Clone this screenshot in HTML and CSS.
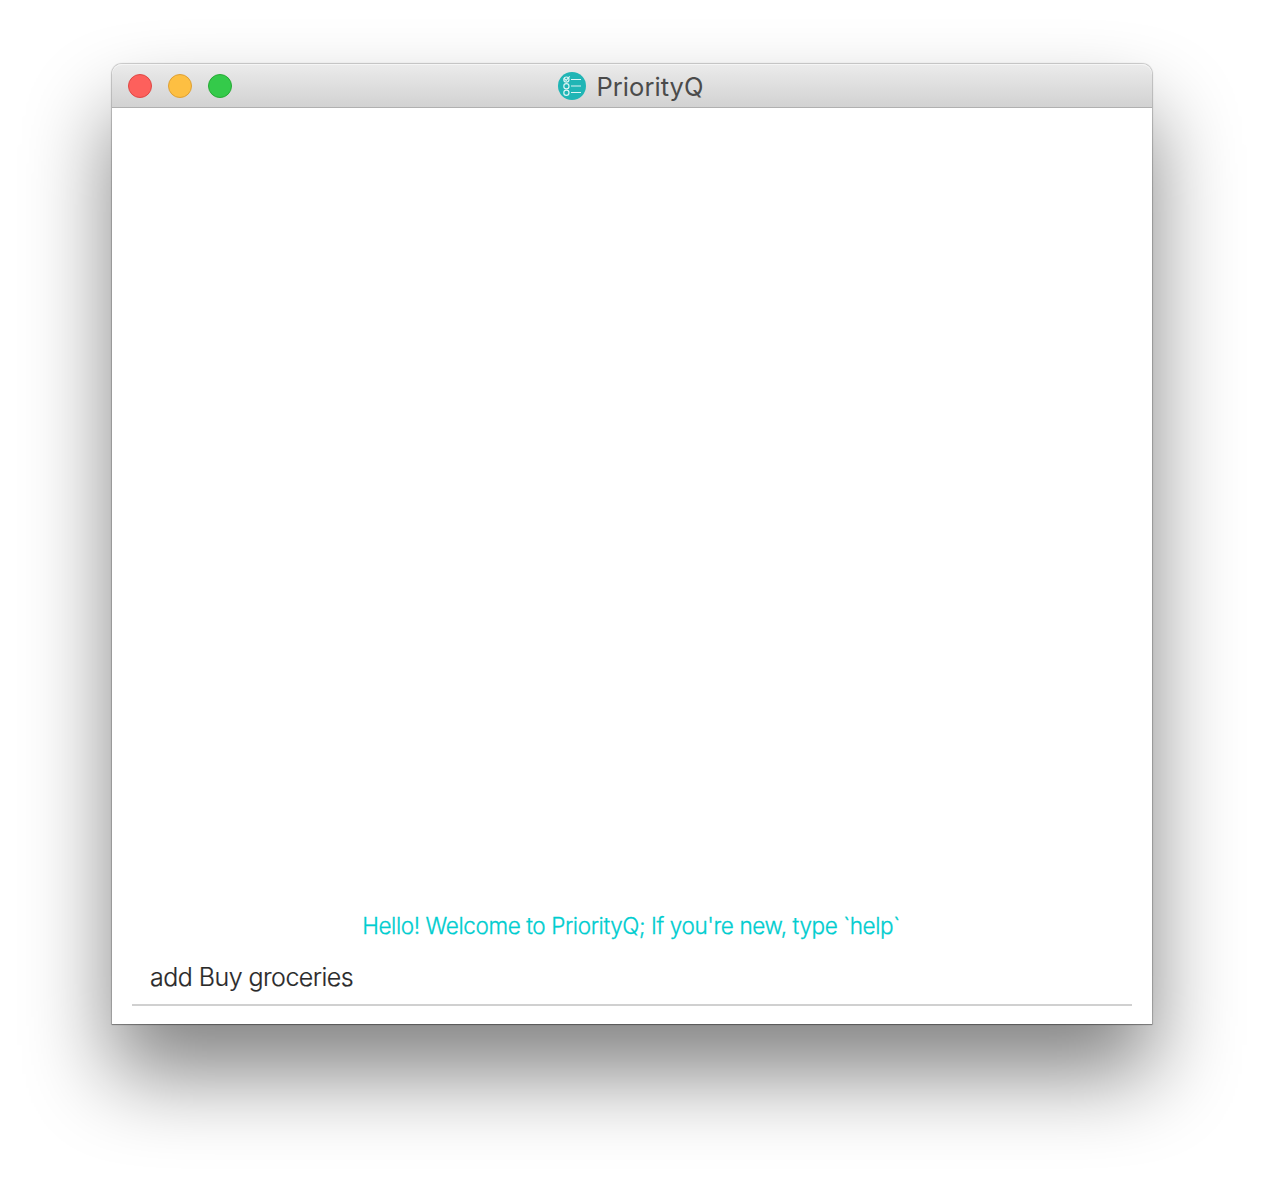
FILE: index.html
```html
<!DOCTYPE html>
<html lang="en">
<head>
<meta charset="utf-8">
<title>PriorityQ</title>
<link rel="stylesheet" href="styles.css">
</head>
<body>
<main class="window">
  <header class="titlebar">
    <div class="controls">
      <span class="control close"></span>
      <span class="control minimize"></span>
      <span class="control zoom"></span>
    </div>
    <div class="heading">
      <svg class="logo" viewBox="0 0 28 28" aria-hidden="true">
        <circle cx="14" cy="14" r="14" fill="#20b5b5"/>
        <g fill="none" stroke="#fff" stroke-width="1.2" opacity=".85">
          <circle cx="8.4" cy="7.6" r="2.6"/>
          <circle cx="8.4" cy="14.2" r="2.6"/>
          <circle cx="8.4" cy="20.7" r="2.6"/>
          <path d="M6 6.2l2.2 2.1 3.5-3.9"/>
          <path d="M13 7.5h10M13 14h10M13 20.5h10"/>
        </g>
      </svg>
      <span class="title">PriorityQ</span>
    </div>
  </header>
  <section class="content">
    <p class="message"><span class="message-text">Hello! Welcome to PriorityQ; If you're new, type `help`</span></p>
    <div class="command"><span class="command-text">add Buy groceries</span></div>
  </section>
</main>
</body>
</html>
```
FILE: styles.css
```css
* { box-sizing: border-box; }
body {
  margin: 0;
  height: 1184px;
  padding: 64px 112px 160px;
  overflow: hidden;
  background: #fff;
  font-family: Inter, "Liberation Sans", sans-serif;
}
.window {
  display: flex;
  flex-direction: column;
  height: 960px;
  border-radius: 10px 10px 0 0;
  background: #fff;
  box-shadow: 0 0 1px 1px rgba(0, 0, 0, .2), 0 1px 1px rgba(0, 0, 0, .25), 0 50px 86px rgba(0, 0, 0, .49);
}
.titlebar {
  display: grid;
  grid-template-columns: 1fr auto 1fr;
  align-items: center;
  height: 44px;
  padding: 0 16px;
  border-bottom: 1px solid #b0b0b0;
  border-radius: 10px 10px 0 0;
  background: linear-gradient(#ebebeb, #d2d2d2);
  box-shadow: inset 0 1px #f5f5f5;
}
.controls { display: flex; gap: 16px; }
.control { width: 24px; height: 24px; border: 1px solid; border-radius: 50%; }
.close { background: #fd605c; border-color: #df4845; }
.minimize { background: #fdbf42; border-color: #dea034; }
.zoom { background: #34ca4a; border-color: #27aa35; }
.heading { display: flex; align-items: center; gap: 10px; padding-right: 2px; color: #4b4b4b; }
.logo { width: 28px; height: 28px; }
.title { font-size: 25.5px; line-height: 32px; letter-spacing: .05px; padding-top: 2px; }
.content {
  display: flex;
  flex: 1;
  flex-direction: column;
  justify-content: flex-end;
  padding: 0 20px 18px;
}
.message {
  margin: 0 0 6px;
  padding-right: 2px;
  text-align: center;
  font-size: 22.5px;
  line-height: 32px;
  font-weight: 300;
  letter-spacing: -.4px;
  color: #00cdcf;
  -webkit-text-stroke: .3px;
}
.command {
  height: 58px;
  padding: 11px 18px 0;
  border-bottom: 2px solid #d0d0d0;
  font-size: 25px;
  line-height: 36px;
  font-weight: 300;
  letter-spacing: -.53px;
  color: #2a2a2a;
  -webkit-text-stroke: .2px;
}
```
